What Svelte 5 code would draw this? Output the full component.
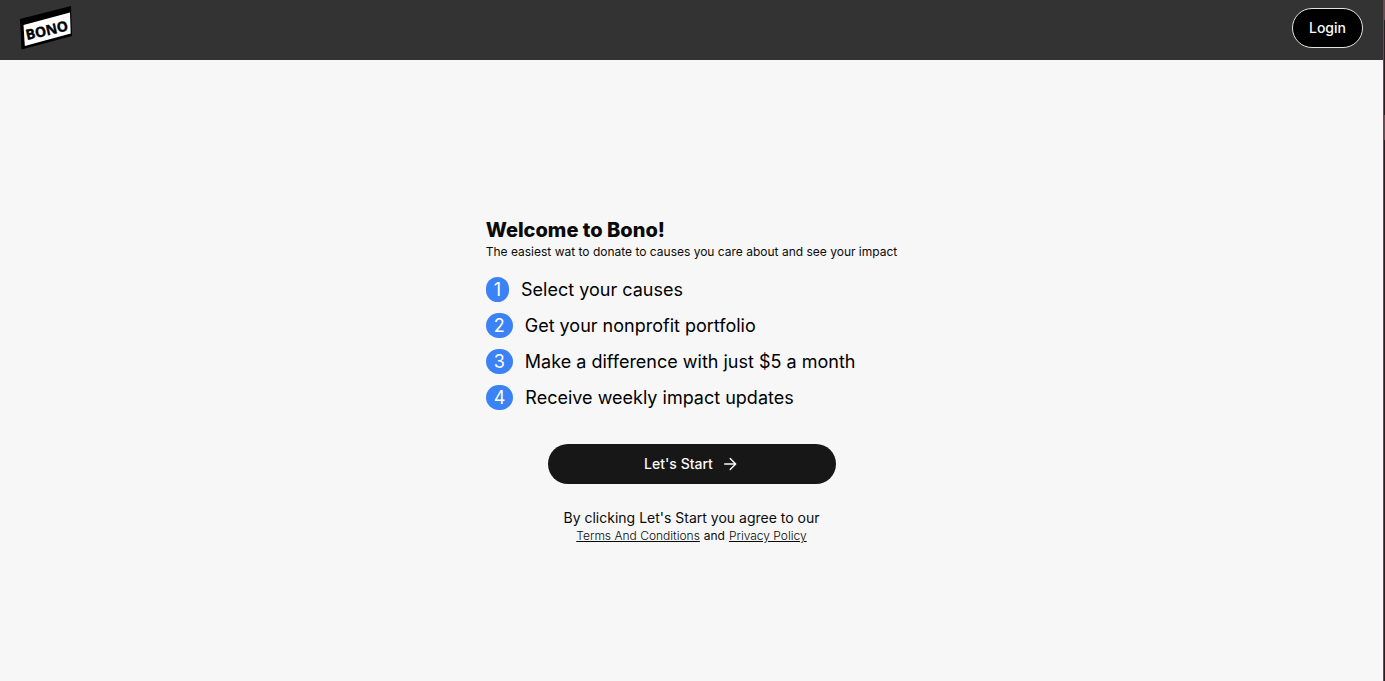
<script>
  const steps = [
    'Select your causes',
    'Get your nonprofit portfolio',
    'Make a difference with just $5 a month',
    'Receive weekly impact updates'
  ];
</script>

<div class="page">
  <header>
    <a class="logo" href="#home" aria-label="Bono home">
      <svg width="54" height="46" viewBox="0 0 54 46" aria-hidden="true">
        <path d="M0 14 51 1 52 31 1.5 44.5Z" fill="#000" />
        <path d="M3.5 20 50 7.5 50.7 28.5 4.8 41Z" fill="#fff" />
        <text x="7" y="35" transform="rotate(-13 7 35)" class="brand">BONO</text>
      </svg>
    </a>
    <button class="login" type="button">Login</button>
  </header>

  <main>
    <section class="welcome">
      <h1>Welcome to Bono!</h1>
      <p class="lead">The easiest wat to donate to causes you care about and see your impact</p>

      <ol>
        {#each steps as step, i}
          <li><span class="number">{i + 1}</span><span>{step}</span></li>
        {/each}
      </ol>

      <button class="start" type="button">
        Let's Start
        <svg width="16" height="16" viewBox="0 0 16 16" aria-hidden="true">
          <path d="M1.7 8H12.7M7.2 2.5 12.7 8 7.2 13.5" />
        </svg>
      </button>

      <p class="agree">By clicking Let's Start you agree to our</p>
      <p class="links">
        <a href="#terms">Terms And Conditions</a> <span>and</span> <a href="#privacy">Privacy Policy</a>
      </p>
    </section>
  </main>
</div>

<style>
  :global(body) {
    margin: 0;
    background: #f7f7f7;
  }

  .page {
    box-sizing: border-box;
    display: flex;
    flex-direction: column;
    min-height: 100vh;
    padding-right: 2px;
    color: #0a0a0a;
    font-family: Inter, 'Liberation Sans', sans-serif;
    background:
      linear-gradient(#6b4a52, #6b4a52) right 1px top / 1px 100% no-repeat,
      linear-gradient(#6b4a52 20px, #2a1c24 20px 115px, #6b4a52 115px 140px, #2a1c24 140px) right top / 1px 100% no-repeat,
      #f7f7f7;
  }

  header {
    display: flex;
    align-items: flex-start;
    justify-content: space-between;
    box-sizing: border-box;
    height: 60px;
    padding: 0 20px;
    background: #333;
  }

  .logo {
    padding-top: 5px;
  }

  .logo svg {
    display: block;
  }

  .brand {
    font: 700 14px 'Open Sans', sans-serif;
    fill: #000;
    stroke: #000;
    stroke-width: 0.4;
  }

  button {
    font-family: inherit;
    font-size: 14px;
    font-weight: 500;
    line-height: 20px;
    color: #fafafa;
    cursor: pointer;
  }

  .login {
    height: 40px;
    margin-top: 8px;
    padding: 0 16px;
    border: 1px solid #e5e5e5;
    border-radius: 20px;
    background: #000;
  }

  main {
    flex: 1;
    display: flex;
    align-items: center;
    justify-content: center;
    padding-top: 20px;
  }

  .welcome {
    display: flex;
    flex-direction: column;
  }

  h1,
  p,
  ol {
    margin: 0;
  }

  h1 {
    font-size: 20px;
    font-weight: 800;
    line-height: 28px;
  }

  .lead {
    font-size: 12px;
    line-height: 16px;
  }

  ol {
    display: flex;
    flex-direction: column;
    gap: 11px;
    padding: 17px 0 34px;
    list-style: none;
    font-size: 18px;
    line-height: 25px;
    color: #000;
  }

  li {
    display: flex;
    gap: 12px;
  }

  .number {
    padding: 0 8px;
    border-radius: 14px;
    background: #3b82f6;
    color: #fff;
  }

  .start {
    display: flex;
    align-items: center;
    justify-content: center;
    align-self: center;
    gap: 10px;
    width: 288px;
    height: 40px;
    border: 0;
    border-radius: 20px;
    background: #171717;
  }

  .start svg {
    fill: none;
    stroke: #fafafa;
    stroke-width: 1.4;
    stroke-linecap: round;
    stroke-linejoin: round;
  }

  .agree {
    margin-top: 24px;
    font-size: 14px;
    line-height: 20px;
    text-align: center;
  }

  .links {
    font-size: 14px;
    line-height: 14px;
    padding-bottom: 2px;
    text-align: center;
  }

  .links a,
  .links span {
    font-size: 12px;
  }

  .links a {
    color: inherit;
    font-weight: 300;
    text-decoration: underline;
  }
</style>
